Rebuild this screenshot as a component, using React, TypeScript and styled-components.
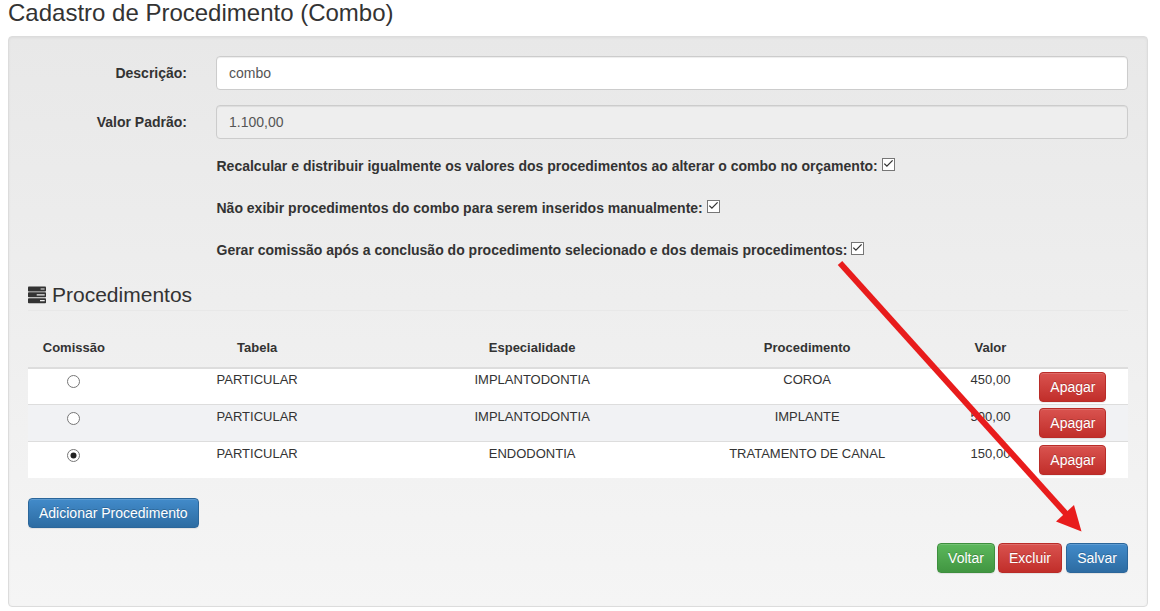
import React from "react";
import styled, { createGlobalStyle } from "styled-components";

const Global = createGlobalStyle`
  html, body { margin: 0; padding: 0; background: #fff; }
  body { font-family: "Liberation Sans", Arial, sans-serif; font-size: 14px; line-height: 20px; color: #333; }
  * { box-sizing: border-box; }
`;
const Page = styled.div`
  position: relative;
  width: 1160px;
  height: 611px;
  padding: 0 12px 0 8px;
  overflow: hidden;
`;
const Title = styled.h3`
  margin: 0 0 11px;
  font-size: 24px;
  font-weight: 400;
  line-height: 25px;
  color: #333;
`;
const Well = styled.div`
  height: 571px;
  padding: 19px 19px 0;
  border: 1px solid #dcdcdc;
  border-radius: 4px;
  background: linear-gradient(to bottom, #e8e8e8, #f5f5f5);
  box-shadow: inset 0 1px 3px rgba(0,0,0,.05);
`;
const FormRow = styled.div`
  display: flex;
  align-items: center;
  margin-bottom: 15px;
`;
const FieldLabel = styled.label`
  flex: 0 0 159px;
  text-align: right;
  font-weight: 700;
  margin-right: 29px;
`;
const Input = styled.input`
  flex: 1;
  height: 34px;
  padding: 6px 12px;
  font: inherit;
  color: #555;
  background: ${p => (p.readOnly ? "#eee" : "#fff")};
  border: 1px solid #ccc;
  border-radius: 4px;
  box-shadow: inset 0 1px 1px rgba(0,0,0,.075);
  outline: none;
`;
const CheckList = styled.div`
  display: flex;
  flex-direction: column;
  gap: 22px;
  margin: 17px 0 20px 188.5px;
`;
const CheckRow = styled.div`
  display: flex;
  align-items: center;
  gap: 4px;
  height: 20px;
  font-weight: 700;
`;
const CheckBox = styled.span`
  display: inline-flex;
  width: 13px;
  height: 13px;
  border: 1px solid #767676;
  background: #fff;
  margin-top: -3px;
`;
const SectionTitle = styled.h4`
  display: flex;
  align-items: center;
  gap: 6px;
  margin: 0 0 20px;
  height: 31px;
  font-size: 21px;
  font-weight: 400;
  line-height: 28px;
  border-bottom: 1px solid #e8e8e8;
  color: #333;
`;
const Table = styled.table`
  width: 1100px;
  table-layout: fixed;
  border-collapse: collapse;
  margin-bottom: 20px;
  font-size: 13px;
`;
const Th = styled.th`
  height: 37px;
  padding: 0 0 3px;
  text-align: center;
  font-weight: 700;
  border-bottom: 2px solid #ddd;
`;
const Row = styled.tr<{ $striped?: boolean }>`
  background: ${p => (p.$striped ? "#f1f2f4" : "#fff")};
`;
const Td = styled.td`
  height: 37px;
  padding: 2px 0 0;
  text-align: center;
  vertical-align: top;
  border-top: 1px solid #ddd;
  tr:first-child > & { border-top: 0; height: 36px; padding-top: 1px; }
`;
const RadioCell = styled(Td)`
  padding-top: 7px;
  tr:first-child > & { padding-top: 6px; }
  & > svg { display: block; margin: 0 auto; }
`;
const ActionCell = styled(Td)`
  text-align: left;
  padding: 3px 0 0 3px;
  tr:first-child > & { padding-top: 3px; }
`;
const palette = {
  red: { top: "#d9534f", bottom: "#c12e2a", border: "#b92c28" },
  green: { top: "#5cb85c", bottom: "#419641", border: "#3e8f3e" },
  blue: { top: "#428bca", bottom: "#2d6ca2", border: "#2b669a" },
};
const Button = styled.button<{ $tone: keyof typeof palette; $w?: number }>`
  height: 30px;
  padding: 4px 10px;
  ${p => (p.$w ? `width: ${p.$w}px;` : "")}
  font: inherit;
  font-size: 14px;
  color: #fff;
  text-shadow: 0 -1px 0 rgba(0,0,0,.2);
  border: 1px solid ${p => palette[p.$tone].border};
  border-radius: 4px;
  background: linear-gradient(to bottom, ${p => palette[p.$tone].top}, ${p => palette[p.$tone].bottom});
  box-shadow: inset 0 1px 0 rgba(255,255,255,.15), 0 1px 1px rgba(0,0,0,.075);
`;
const Footer = styled.div`
  display: flex;
  justify-content: flex-end;
  gap: 3px;
  margin-top: 15px;
  & > :last-child { margin-left: 1px; }
`;
const ArrowLayer = styled.svg`
  position: absolute;
  left: 0;
  top: 0;
  pointer-events: none;
`;

const Check = () => (
  <CheckBox>
    <svg width="11" height="11" viewBox="0 0 11 11" fill="none">
      <path d="M1.3 4.6 L3.9 7.2 L9.6 1.4" stroke="#333" strokeWidth="1.3" />
    </svg>
  </CheckBox>
);
const Radio = ({ on }: { on?: boolean }) => (
  <svg width="13" height="13" viewBox="0 0 13 13">
    <circle cx="6.5" cy="6.5" r="6" fill="#fff" stroke="#767676" />
    {on && <circle cx="6.5" cy="6.5" r="3" fill="#222" />}
  </svg>
);
const TasksIcon = () => (
  <svg width="18" height="18" viewBox="0 0 18 18">
    <rect x="0" y="0.5" width="18" height="5" rx="0.8" fill="#333" />
    <rect x="0" y="6.3" width="18" height="5" rx="0.8" fill="#333" />
    <rect x="0" y="12.2" width="18" height="5" rx="0.8" fill="#333" />
    <path d="M12.6 3h4M8.7 8.8h8M12 14.7h4.7" stroke="#eee" strokeWidth="1.2" />
  </svg>
);

const rows = [
  { e: "IMPLANTODONTIA", p: "COROA", v: "450,00" },
  { e: "IMPLANTODONTIA", p: "IMPLANTE", v: "500,00" },
  { e: "ENDODONTIA", p: "TRATAMENTO DE CANAL", v: "150,00", on: true },
];

export default function App() {
  return (
    <Page>
      <Global />
      <Title>Cadastro de Procedimento (Combo)</Title>
      <Well>
        <FormRow>
          <FieldLabel>Descrição:</FieldLabel>
          <Input defaultValue="combo" />
        </FormRow>
        <FormRow>
          <FieldLabel>Valor Padrão:</FieldLabel>
          <Input defaultValue="1.100,00" readOnly />
        </FormRow>
        <CheckList>
          <CheckRow>Recalcular e distribuir igualmente os valores dos procedimentos ao alterar o combo no orçamento: <Check /></CheckRow>
          <CheckRow>Não exibir procedimentos do combo para serem inseridos manualmente: <Check /></CheckRow>
          <CheckRow>Gerar comissão após a conclusão do procedimento selecionado e dos demais procedimentos: <Check /></CheckRow>
        </CheckList>
        <SectionTitle><TasksIcon />Procedimentos</SectionTitle>
        <Table>
          <colgroup>
            <col style={{ width: "8.333%" }} />
            <col style={{ width: "25%" }} />
            <col style={{ width: "25%" }} />
            <col style={{ width: "25%" }} />
            <col style={{ width: "8.333%" }} />
            <col style={{ width: "8.333%" }} />
          </colgroup>
          <thead>
            <tr>
              <Th>Comissão</Th><Th>Tabela</Th><Th>Especialidade</Th><Th>Procedimento</Th><Th>Valor</Th><Th />
            </tr>
          </thead>
          <tbody>
            {rows.map((r, i) => (
              <Row key={i} $striped={i === 1}>
                <RadioCell><Radio on={r.on} /></RadioCell>
                <Td>PARTICULAR</Td>
                <Td>{r.e}</Td>
                <Td>{r.p}</Td>
                <Td>{r.v}</Td>
                <ActionCell><Button $tone="red">Apagar</Button></ActionCell>
              </Row>
            ))}
          </tbody>
        </Table>
        <Button $tone="blue">Adicionar Procedimento</Button>
        <Footer>
          <Button $tone="green" $w={58}>Voltar</Button>
          <Button $tone="red" $w={64}>Excluir</Button>
          <Button $tone="blue" $w={62}>Salvar</Button>
        </Footer>
      </Well>
      <ArrowLayer width="1160" height="611" viewBox="0 0 1160 611">
        <path d="M840 263 L1068 516" stroke="#e81c1c" strokeWidth="6" fill="none" />
        <path d="M1081.5 531.5 L1056 521.5 L1074 505 Z" fill="#e81c1c" />
      </ArrowLayer>
    </Page>
  );
}
